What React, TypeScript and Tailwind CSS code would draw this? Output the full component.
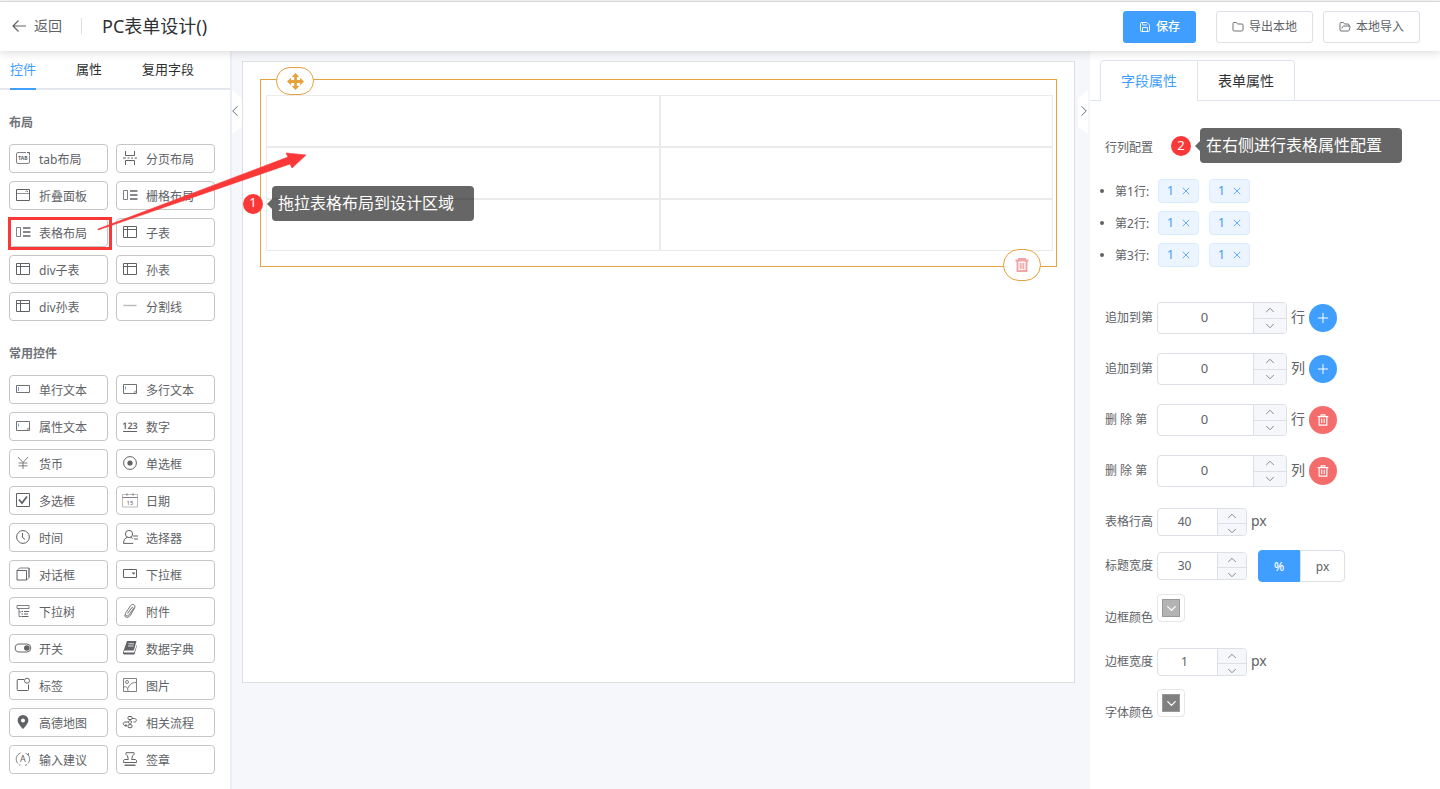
import React, { useState } from 'react';
import { ChevronDown, ChevronLeft, ChevronRight, ChevronUp, Folder, FolderOpen, Plus, Save, X } from 'lucide-react';

type IconName = keyof typeof ICONS;
type Widget = { label: string; icon: IconName; highlighted?: boolean };

const tableIcon = <path d="M.5 1.500h13v11H.5zM.5 4.500h13M4.500 1.500v11" />;
const gridIcon = (
  <>
    <path d="M.5 2.500h4v9h-4z" strokeWidth=".8" />
    <path d="M7 3h7.500M7 7h7.500M7 11h7.500" strokeWidth="1.700" />
  </>
);
const areaIcon = (
  <>
    <path d="M.5 2.500h13v9H.5z" strokeWidth=".9" />
    <path d="M2.500 4.500v3" stroke="#5b86e5" strokeWidth=".8" />
    <path d="M10.500 10.500l2-2v2z" fill="currentColor" stroke="none" />
  </>
);

// 14x14 line icons for the widget palette
const ICONS = {
  tab: (
    <>
      <path d="M10 1.500H2A1.500 1.500 0 0 0 .5 3v8A1.500 1.500 0 0 0 2 12.500h10a1.500 1.500 0 0 0 1.500-1.500V4.500" strokeWidth=".8" />
      <path d="M11 1.500h2.500V4" />
      <text x="7" y="9.300" textAnchor="middle" fontSize="5" fontWeight="700" fill="currentColor" stroke="none">TAB</text>
    </>
  ),
  page: <path d="M2.500 0v4.500h9V0M2.500 14V9.500h9V14M0 7h3M4.500 7h2M8 7h2M11.500 7H14" />,
  collapse: (
    <>
      <path d="M.5 1.500h13v11H.5z" />
      <path d="M.5 5.500h13" strokeWidth=".7" />
      <path d="M9.500 4l1.200-1.200L12 4" strokeWidth=".8" />
    </>
  ),
  grid: gridIcon,
  table: tableIcon,
  divider: <path d="M.5 6.500h13" stroke="#bbb" strokeWidth="1.400" />,
  input: (
    <>
      <path d="M.5 3.500h13v7H.5z" strokeWidth=".9" />
      <path d="M2.500 5v4" stroke="#5b86e5" strokeWidth=".8" />
    </>
  ),
  textarea: areaIcon,
  number: (
    <>
      <text x="7" y="9.500" textAnchor="middle" fontSize="9" fontWeight="600" fill="currentColor" stroke="none" textRendering="geometricPrecision">123</text>
      <path d="M0 12.500h14" />
    </>
  ),
  money: <path d="M2 1l5 5.500L12 1M7 6.500V13M2.500 7h9M2.500 9.800h9" strokeWidth=".8" />,
  radio: (
    <>
      <circle cx="7" cy="7" r="6.400" />
      <circle cx="7" cy="7" r="2.600" fill="currentColor" stroke="none" />
    </>
  ),
  checkbox: (
    <>
      <path d="M.5.500h13v13H.5z" />
      <path d="M3 6.500l3 3.500 5-6.500" strokeWidth="1.800" />
    </>
  ),
  date: (
    <>
      <path d="M-.5 1.500h15v12.500h-15z" stroke="#b3a7a7" strokeWidth=".8" />
      <path d="M4 .3v2.400M10 .3v2.400M-.5 4.500h15" strokeWidth=".8" />
      <text x="7" y="11.500" textAnchor="middle" fontSize="6" fill="currentColor" stroke="none">15</text>
    </>
  ),
  time: (
    <>
      <circle cx="7" cy="7" r="6.400" />
      <path d="M6.500 3v4.500L9 9.500" />
    </>
  ),
  person: (
    <>
      <circle cx="6" cy="4" r="3.600" />
      <path d="M4.500 7.200C2 8 .5 10 .5 13.400h9.800M7.500 7.200c1 .3 1.800.800 2.300 1.400M10 6h5M11 9h4" />
    </>
  ),
  dialog: (
    <>
      <path d="M1 3.500h9.500v9.500H1z" />
      <path d="M1 3.500L3.500 1H13v9.500L10.500 13M13 1v9.500" strokeWidth=".8" />
    </>
  ),
  select: (
    <>
      <path d="M.5 2.500h13v8H.5z" />
      <path d="M8.500 5.500h4l-2 2.200z" fill="currentColor" stroke="none" />
    </>
  ),
  tree: (
    <>
      <path d="M1 1.500h12v3H1zM3 4.500v8h2M3 8h2" strokeWidth=".8" />
      <path d="M5.500 7.500h1.500M8 7.500h5M5.500 10h1.500M8 10h4M5.500 12.500h7" strokeWidth="1.100" />
    </>
  ),
  clip: <path d="M4.500 9.500L8.500 4c1-1.300 2.400-.2 1.500 1.200L5.800 11c-1.600 2-4.500.3-3-2.300L7.600 1.700c2-2.700 5.500-.5 4 2.300L7.600 11c-1.500 3-6.500 3.500-5.600-.5" strokeWidth=".9" />,
  toggle: (
    <>
      <rect x="-.8" y="3" width="15.600" height="8" rx="4" />
      <circle cx="10.800" cy="7" r="2.800" fill="currentColor" stroke="none" />
    </>
  ),
  book: (
    <>
      <path d="M4 0h9.500l-2.700 9.500H2c-1 0-1.500 1-1 2h10.200L13.700 4l.3.500-2.500 9H1.200C-.2 13.500-.2 12 .3 10.500z" fill="currentColor" stroke="none" />
      <path d="M5.500 2.800h5.500M5 5h5.500" stroke="#fff" strokeWidth=".8" />
    </>
  ),
  badge: (
    <>
      <path d="M8 1.500H2A.8.800 0 0 0 1.200 2.300v9.400a.8.800 0 0 0 .8.800h9.700a.8.800 0 0 0 .8-.8V6.500" />
      <circle cx="11" cy="2.700" r="2.500" />
    </>
  ),
  image: (
    <>
      <path d="M.5.500h13v13H.5z" strokeWidth=".8" />
      <circle cx="4" cy="4" r="1.500" strokeWidth=".8" />
      <path d="M.5 9.500c3-2 4 0 4.500 3.500M5 10.500c1-4 4-6 8-6" strokeWidth=".8" />
    </>
  ),
  pin: (
    <path
      d="M7 0a5.400 5.400 0 0 0-5.400 5.400C1.600 8.500 7 14 7 14s5.400-5.500 5.400-8.600A5.400 5.400 0 0 0 7 0zm0 3.500a2 2 0 1 1 0 4 2 2 0 0 1 0-4z"
      fill="currentColor"
      fillRule="evenodd"
      stroke="none"
    />
  ),
  flow: (
    <>
      <rect x="5" y="1.500" width="4" height="3" rx="1" />
      <rect x="5.500" y="5.800" width="3" height="2.600" rx="1" />
      <rect x="5" y="9.700" width="4" height="3" rx="1" />
      <path d="M5 7H2C-.3 7-.3 10.500 2 10.500h1.500M9 3.500h2.500c2.500 0 2.500 3.500 0 3.500H10.500M2.500 9.300l1.500 1.200-1.500 1" />
    </>
  ),
  suggest: (
    <>
      <text x="7" y="10.200" textAnchor="middle" fontSize="9" fill="currentColor" stroke="none">A</text>
      <path d="M4.500 1A6.400 6.400 0 0 0 2 11.500M3 13h1.500M9.500 1.200A6.400 6.400 0 0 1 12 11.500M9 13.300l2-.6M12.500 1v2" strokeWidth=".8" />
    </>
  ),
  stamp: (
    <>
      <path d="M3 .7h8c.5 1.200 0 2.300-1.500 3L8.700 7.500H12c1 0 1.500.7 1.500 1.700v1.300H.5V9.200c0-1 .5-1.700 1.500-1.700h3.300L4.500 3.700C3 3 2.500 1.900 3 .7z" />
      <path d="M1.500 13.200h11" strokeWidth="1.400" />
    </>
  ),
};

const LAYOUT_WIDGETS: Widget[] = [
  { label: 'tab布局', icon: 'tab' },
  { label: '分页布局', icon: 'page' },
  { label: '折叠面板', icon: 'collapse' },
  { label: '栅格布局', icon: 'grid' },
  { label: '表格布局', icon: 'grid', highlighted: true },
  { label: '子表', icon: 'table' },
  { label: 'div子表', icon: 'table' },
  { label: '孙表', icon: 'table' },
  { label: 'div孙表', icon: 'table' },
  { label: '分割线', icon: 'divider' },
];

const COMMON_WIDGETS: Widget[] = [
  { label: '单行文本', icon: 'input' },
  { label: '多行文本', icon: 'textarea' },
  { label: '属性文本', icon: 'textarea' },
  { label: '数字', icon: 'number' },
  { label: '货币', icon: 'money' },
  { label: '单选框', icon: 'radio' },
  { label: '多选框', icon: 'checkbox' },
  { label: '日期', icon: 'date' },
  { label: '时间', icon: 'time' },
  { label: '选择器', icon: 'person' },
  { label: '对话框', icon: 'dialog' },
  { label: '下拉框', icon: 'select' },
  { label: '下拉树', icon: 'tree' },
  { label: '附件', icon: 'clip' },
  { label: '开关', icon: 'toggle' },
  { label: '数据字典', icon: 'book' },
  { label: '标签', icon: 'badge' },
  { label: '图片', icon: 'image' },
  { label: '高德地图', icon: 'pin' },
  { label: '相关流程', icon: 'flow' },
  { label: '输入建议', icon: 'suggest' },
  { label: '签章', icon: 'stamp' },
];

function TrashIcon({ className }: { className?: string }) {
  return (
    <svg viewBox="0 0 14 14" className={className} fill="none" stroke="currentColor" strokeWidth="1.300">
      <path d="M.8 3h12.400M4.800 3V1h4.400v2M2.500 3v10h9V3M5.500 5.500v5M8.500 5.500v5" />
    </svg>
  );
}

function WidgetGroup({ title, widgets }: { title: string; widgets: Widget[] }) {
  return (
    <section className="px-[9px] pt-[25px]">
      <h2 className="text-xs leading-4 font-bold text-[#707379]">{title}</h2>
      <div className="mt-[13px] grid grid-cols-[99px_99px] gap-2 last:mb-0">
        {widgets.map((w) => (
          <div key={w.label} className="relative">
            <button className="flex h-[29px] w-full items-center gap-[9px] rounded border border-[#c6c6c6] bg-white pt-[2px] pl-[6px] text-xs text-[#606266]">
              <svg viewBox="0 0 14 14" className="mb-1 size-[14px] shrink-0 overflow-visible" fill="none" stroke="currentColor">
                {ICONS[w.icon]}
              </svg>
              {w.label}
            </button>
            {w.highlighted && (
              <span className="pointer-events-none absolute -top-px -right-1 -bottom-[3px] -left-px border-3 border-[#fa3838]" />
            )}
          </div>
        ))}
      </div>
    </section>
  );
}

/** Numbered red marker with its dark explanation bubble. */
function Callout({ step, text }: { step: number; text: string }) {
  return (
    <div className="flex items-center">
      <span className="flex size-5 items-center justify-center rounded-full bg-[#fa3838] pb-px text-[13px] text-white">{step}</span>
      <span className="ml-1 h-0 w-0 border-y-5 border-r-5 border-y-transparent border-r-[#666]" />
      <span className="h-[35px] w-[202px] rounded bg-black/60 pl-[6px] text-base leading-[35px] text-white">{text}</span>
    </div>
  );
}

function Stepper({ id, initial, small }: { id: string; initial: number; small?: boolean }) {
  const [value, setValue] = useState(initial);
  return (
    <div className={`flex overflow-hidden rounded border border-[#dcdfe6] bg-white ${small ? 'h-7 w-[90px]' : 'h-8 w-[130px]'}`}>
      <input
        id={id}
        inputMode="numeric"
        value={value}
        onChange={(e) => setValue(Number(e.target.value) || 0)}
        className={`min-w-0 flex-1 text-center text-[#606266] outline-none ${small ? 'pr-[6px] text-xs' : 'pr-[2px] pb-[2px] text-[13px]'}`}
      />
      <div className={`flex flex-col divide-y divide-[#dcdfe6] border-l border-[#dcdfe6] bg-[#f5f7fa] text-[#85888e] ${small ? 'w-[29px]' : 'w-[33px]'}`}>
        <button aria-label="增加" className="flex flex-1 items-center justify-center" onClick={() => setValue(value + 1)}>
          <ChevronUp size={14} strokeWidth={1.7} />
        </button>
        <button aria-label="减少" className="flex flex-1 items-center justify-center" onClick={() => setValue(value - 1)}>
          <ChevronDown size={14} strokeWidth={1.7} />
        </button>
      </div>
    </div>
  );
}

function FieldLabel({ htmlFor, children }: { htmlFor: string; children: React.ReactNode }) {
  return <label htmlFor={htmlFor} className="w-12 shrink-0 text-xs leading-5 whitespace-nowrap">{children}</label>;
}

function ColorField({ id, label, swatch }: { id: string; label: string; swatch: string }) {
  return (
    <div className="flex h-[34px] items-start gap-1">
      <div className="self-end"><FieldLabel htmlFor={id}>{label}</FieldLabel></div>
      <button id={id} className="flex size-7 items-center justify-center rounded border border-[#e6e6e6] bg-white">
        <span className={`flex size-[18px] items-center justify-center border border-[#999] text-white ${swatch}`}>
          <ChevronDown size={15} strokeWidth={2} className="shrink-0" />
        </span>
      </button>
    </div>
  );
}

const EDIT_ROWS = [
  { id: 'add-row', label: '追加到第', unit: '行', remove: false },
  { id: 'add-col', label: '追加到第', unit: '列', remove: false },
  { id: 'del-row', label: '删 除 第', unit: '行', remove: true },
  { id: 'del-col', label: '删 除 第', unit: '列', remove: true },
];

function Header() {
  return (
    <header className="relative z-10 mt-px flex h-[50px] shrink-0 items-center border-t border-[#d9d9d9] bg-white pr-5 pl-3 shadow-[0_2px_8px_rgba(0,0,0,0.14)]">
      <div className="flex items-center pb-[2px]">
        <button className="flex items-center gap-2 text-sm text-[#606266]">
          <svg viewBox="0 0 14 14" className="size-[14px]" fill="none" stroke="currentColor" strokeWidth="1.200">
            <path d="M6.500 1.500L1 7l5.500 5.500M1 7h13" />
          </svg>
          返回
        </button>
        <span className="ml-[19px] h-4 w-px bg-[#dcdfe6]" />
        <h1 className="ml-5 text-lg text-[#303133]">PC表单设计()</h1>
      </div>
      <div className="ml-auto flex text-xs text-[#606266]">
        <button className="flex h-8 w-[73px] items-center justify-center gap-[5px] rounded-[3px] bg-[#409eff] font-medium text-white">
          <Save size={12} strokeWidth={1.8} />保存
        </button>
        <button className="ml-5 flex h-8 w-[97px] items-center justify-center gap-[5px] rounded-[3px] border border-[#dcdfe6] bg-white">
          <Folder size={12} strokeWidth={1.8} />导出本地
        </button>
        <button className="ml-[10px] flex h-8 w-[97px] items-center justify-center gap-[5px] rounded-[3px] border border-[#dcdfe6] bg-white">
          <FolderOpen size={12} strokeWidth={1.8} />本地导入
        </button>
      </div>
    </header>
  );
}

function Palette() {
  return (
    <aside className="w-[232px] shrink-0 border-r-2 border-[#eceef5] bg-white">
      <nav className="flex h-[39px] gap-10 border-b-2 border-[#e4e7ed] px-[10px] text-[13px] text-[#303133]">
        <button className="-mb-[2px] border-b-2 border-[#409eff] text-[#409eff]">控件</button>
        <button>属性</button>
        <button>复用字段</button>
      </nav>
      <WidgetGroup title="布局" widgets={LAYOUT_WIDGETS} />
      <WidgetGroup title="常用控件" widgets={COMMON_WIDGETS} />
    </aside>
  );
}

function Canvas() {
  return (
    <main className="relative min-w-0 flex-1 pt-[10px] pr-[15px] pl-[10px]">
      <button
        aria-label="收起左栏"
        className="absolute top-[39px] left-0 flex h-11 w-[10px] items-center bg-white pb-[2px] text-[#606b80] [clip-path:polygon(0_0,100%_18%,100%_84%,0_100%)]"
      >
        <ChevronLeft size={18} strokeWidth={1.3} className="-ml-[6px] shrink-0" />
      </button>
      <button
        aria-label="收起右栏"
        className="absolute top-[39px] right-[2px] flex h-11 w-[10px] items-center bg-white pb-[2px] text-[#606b80] [clip-path:polygon(0_18%,100%_0,100%_100%,0_84%)]"
      >
        <ChevronRight size={18} strokeWidth={1.3} className="-ml-[3px] shrink-0" />
      </button>

      <div className="min-h-[622px] border border-[#dcdfe3] bg-white p-[17px]">
        <div className="relative border border-[#e6a23c] pt-[15px] pr-[3px] pb-[15px] pl-[5px]">
          <table className="w-full table-fixed border-separate border-spacing-0">
            <tbody>
              {[0, 1, 2].map((row) => (
                <tr key={row}>
                  <td className="h-[52px] border border-[#ebebeb]" />
                  <td className="h-[52px] border border-[#ebebeb]" />
                </tr>
              ))}
            </tbody>
          </table>
          <button
            aria-label="移动"
            className="absolute -top-[13px] left-[15px] flex h-7 w-[38px] items-center justify-center rounded-[14px] border border-[#e6a23c] bg-white text-[#e6a23c]"
          >
            <svg viewBox="0 0 16 16" className="size-[17px]" fill="currentColor">
              <path d="M8 0l3.600 3.700H9.300v3h3V4.400L16 8l-3.700 3.600V9.300h-3v3h2.300L8 16l-3.600-3.700h2.300v-3h-3v2.300L0 8l3.700-3.600v2.300h3v-3H4.400z" />
            </svg>
          </button>
          <button
            aria-label="删除"
            className="absolute right-[15px] -bottom-[15px] flex h-8 w-[38px] items-center justify-center rounded-2xl border border-[#e6a23c] bg-white text-[#f3a3a3]"
          >
            <svg viewBox="0 0 14 14" className="size-[14px]" fill="none" stroke="currentColor">
              <path d="M.5 2.500h13M4 2.500V1h6v1.500M2.500 3v10h9V3" strokeWidth="1.900" />
              <path d="M5.300 5v6M7 5v6M8.700 5v6" strokeWidth="1.200" />
            </svg>
          </button>
        </div>
      </div>

      <div className="absolute top-[135px] left-[11px]">
        <Callout step={1} text="拖拉表格布局到设计区域" />
      </div>
    </main>
  );
}

function PropertyPanel() {
  const [unit, setUnit] = useState('%');
  return (
    <aside className="w-[350px] shrink-0 bg-white pt-[9px] text-[#606266]">
      <nav className="flex h-[41px] border-b border-[#dfe4ed] pl-[10px] text-sm">
        <button className="-mb-px w-[98px] rounded-tl border border-b-0 border-[#dfe4ed] bg-white text-[#409eff]">字段属性</button>
        <button className="w-[97px] rounded-tr border-t border-r border-[#dfe4ed] text-[#303133]">表单属性</button>
      </nav>

      <div className="pl-[15px]">
        <div className="relative mt-[37px] text-xs leading-5">
          行列配置
          <div className="absolute -top-[10px] left-[66px]">
            <Callout step={2} text="在右侧进行表格属性配置" />
          </div>
        </div>

        <ul className="mt-[21px] flex flex-col gap-2">
          {[1, 2, 3].map((row) => (
            <li key={row} className="-ml-[5px] flex h-6 items-center text-xs">
              <span className="size-1 rounded-full bg-[#606266]" />
              <span className="ml-[11px] w-[43px] pt-[2px] whitespace-nowrap">第{row}行:</span>
              {[0, 1].map((col) => (
                <span key={col} className="mr-[10px] flex h-6 w-[41px] items-center justify-center gap-[6px] rounded border border-[#d9ecff] bg-[#ecf5ff] pl-[2px] text-[13px] text-[#409eff]">
                  1
                  <button aria-label="移除"><X size={12} strokeWidth={1.6} /></button>
                </span>
              ))}
            </li>
          ))}
        </ul>

        <div className="mt-[35px] flex flex-col gap-[19px]">
          {EDIT_ROWS.map((r) => (
            <div key={r.id} className="flex items-center gap-1 text-sm">
              <FieldLabel htmlFor={r.id}>{r.label}</FieldLabel>
              <Stepper id={r.id} initial={0} />
              <span className="pb-[2px] leading-5">{r.unit}</span>
              <button
                aria-label={r.remove ? '删除' : '追加'}
                className={`flex size-7 items-center justify-center rounded-full text-white ${r.remove ? 'bg-[#f56c6c]' : 'bg-[#409eff]'}`}
              >
                {r.remove ? <TrashIcon className="size-3" /> : <Plus size={16} strokeWidth={1.5} />}
              </button>
            </div>
          ))}
        </div>

        <div className="mt-[21px] flex items-center gap-1 text-sm">
          <FieldLabel htmlFor="row-height">表格行高</FieldLabel>
          <Stepper id="row-height" initial={40} small />
          <span className="pb-[2px] leading-5">px</span>
        </div>

        <div className="mt-[14px] flex items-center gap-1">
          <FieldLabel htmlFor="title-width">标题宽度</FieldLabel>
          <Stepper id="title-width" initial={30} small />
          <div className="ml-[7px] flex h-8 text-xs">
            {['%', 'px'].map((u) => (
              <label
                key={u}
                className={`relative flex items-center justify-center border pt-[2px] first:w-[42px] first:rounded-l last:w-[45px] last:rounded-r ${unit === u ? 'border-[#409eff] bg-[#409eff] font-medium text-white' : 'border-[#dcdfe6]'}`}
              >
                <input type="radio" name="unit" className="absolute inset-0 appearance-none" checked={unit === u} onChange={() => setUnit(u)} />
                {u}
              </label>
            ))}
          </div>
        </div>

        <div className="mt-3">
          <ColorField id="border-color" label="边框颜色" swatch="bg-[#b3b3b3]" />
        </div>

        <div className="mt-5 flex items-center gap-1 text-sm">
          <FieldLabel htmlFor="border-width">边框宽度</FieldLabel>
          <Stepper id="border-width" initial={1} small />
          <span className="pb-[2px] leading-5">px</span>
        </div>

        <div className="mt-[13px]">
          <ColorField id="font-color" label="字体颜色" swatch="bg-[#808080]" />
        </div>
      </div>
    </aside>
  );
}

export default function App() {
  return (
    <div className="relative flex min-h-screen flex-col bg-[#f5f7fa] font-['Noto_Sans','Noto_Sans_CJK_SC',sans-serif]">
      <Header />
      <div className="flex flex-1">
        <Palette />
        <Canvas />
        <PropertyPanel />
      </div>
      {/* drag hint from the palette entry to the canvas */}
      <svg viewBox="0 0 210 80" className="pointer-events-none absolute top-[152px] left-[97px] z-20 h-20 w-[210px]">
        <path d="M1 77L191 5 189 1l20 2-14 13-2-4L1 78z" fill="#fa3838" stroke="#fa3838" strokeWidth=".6" />
      </svg>
    </div>
  );
}
